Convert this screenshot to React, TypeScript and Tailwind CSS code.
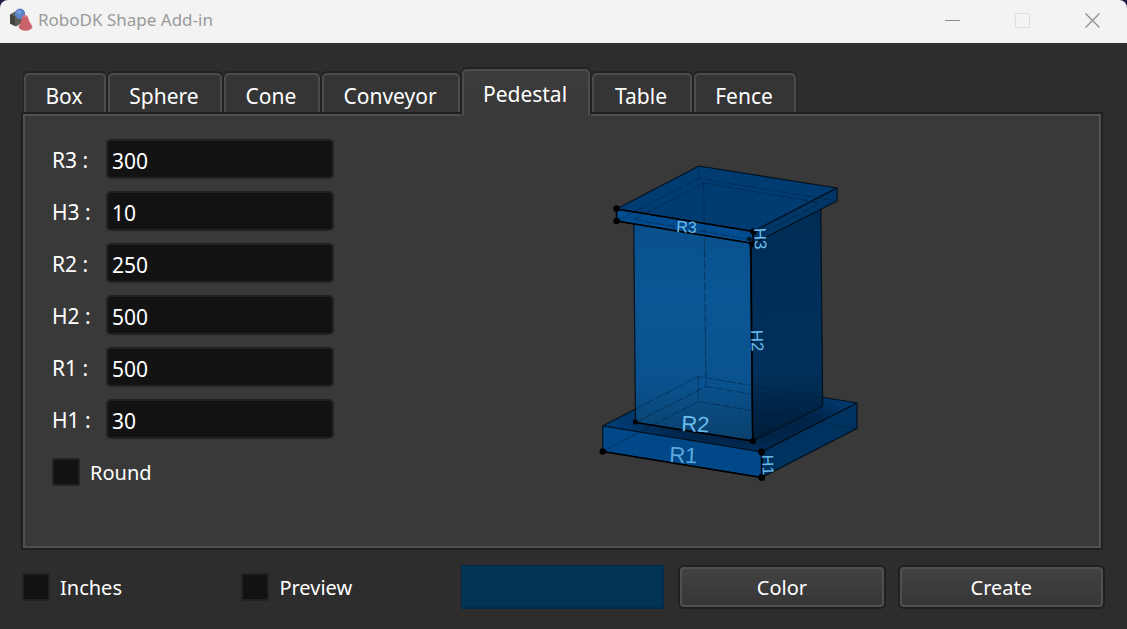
import { useState } from "react";

const tabs = [
  { name: "Box", width: "w-[82px]" },
  { name: "Sphere", width: "w-[114px]" },
  { name: "Cone", width: "w-[96px]" },
  { name: "Conveyor", width: "w-[138px]" },
  { name: "Pedestal", width: "w-[128px]" },
  { name: "Table", width: "w-[100px]" },
  { name: "Fence", width: "w-[102px]" },
];

const fields = [
  { id: "R3", value: "300" },
  { id: "H3", value: "10" },
  { id: "R2", value: "250" },
  { id: "H2", value: "500" },
  { id: "R1", value: "500" },
  { id: "H1", value: "30" },
];

function AppIcon() {
  return (
    <svg viewBox="0 0 24 24" className="w-6 h-6" aria-hidden="true">
      <path d="M1 6.5 L7 3 L13 6 V15 L7 18.5 L1 15.5 Z" fill="#5c5d56" />
      <path d="M1 6.5 L6 8.5 V18 L1 15.5 Z" fill="#44453f" />
      <circle cx="11" cy="5.8" r="5.2" fill="#5b83c9" />
      <circle cx="10" cy="4.3" r="2.4" fill="#7298d8" />
      <path d="M13.5 8 Q16 6.5 18.5 8 Q19.5 13 23.5 19 Q22 22.8 16.5 22.8 Q11 22.5 9.5 19 Q12.5 14 13.5 8 Z" fill="#c9626a" />
      <path d="M13.5 8 Q16 6.5 18.5 8 Q16 10 13.5 8 Z" fill="#d9828a" />
    </svg>
  );
}

function TitleBar() {
  return (
    <header className="bg-[#1d1c45]">
      <div className="flex h-[43px] items-center rounded-t-lg bg-[#f3f3f3] pb-[3px] pl-[9px]">
        <AppIcon />
        <h1 className="ml-[5px] flex-1 text-[17px] leading-6 text-[#999999]">RoboDK Shape Add-in</h1>
        <div className="flex">
          <button type="button" aria-label="Minimize" className="flex h-10 w-[70px] items-center justify-center">
            <svg viewBox="0 0 16 16" className="w-4 h-4" stroke="#8f8f8f" fill="none">
              <path d="M1 8.5 H16" />
            </svg>
          </button>
          <button type="button" aria-label="Maximize" disabled className="flex h-10 w-[70px] items-center justify-center">
            <svg viewBox="0 0 16 16" className="w-4 h-4" stroke="#dedede" fill="none">
              <rect x="1.5" y="1.5" width="14" height="14" rx="1" />
            </svg>
          </button>
          <button type="button" aria-label="Close" className="flex h-10 w-[70px] items-center justify-center">
            <svg viewBox="0 0 16 16" className="w-4 h-4" stroke="#8f8f8f" strokeWidth="1.3" fill="none">
              <path d="M1.5 1.5 L15.5 15.5 M15.5 1.5 L1.5 15.5" />
            </svg>
          </button>
        </div>
      </div>
    </header>
  );
}

function CheckBox({ label }: { label: string }) {
  return (
    <label className="flex items-center gap-2.5 text-[20px] leading-7">
      <input type="checkbox" className="h-7 w-7 appearance-none rounded-xs border-2 border-[#222222] bg-[#121212] checked:bg-[#4a4a4a]" />
      <span className="pt-0.5">{label}</span>
    </label>
  );
}

function PushButton({ label }: { label: string }) {
  return (
    <button
      type="button"
      className="h-10 rounded-[4px] border-2 border-[#505050] bg-linear-to-b from-[#424242] to-[#363636] pt-0.5 text-[20px] leading-7 text-white shadow-[0_0_0_2px_#202020]"
    >
      {label}
    </button>
  );
}

function PedestalDrawing() {
  return (
    <svg viewBox="598 160 264 326" className="mt-[21px] h-[326px] w-[264px]" role="img" aria-label="Pedestal dimensions">
      <defs>
        <linearGradient id="front" x1="0" y1="0" x2="0" y2="1">
          <stop offset="0" stopColor="#08508c" />
          <stop offset="0.35" stopColor="#0a5694" />
          <stop offset="0.75" stopColor="#09528d" />
          <stop offset="1" stopColor="#0a3f6b" />
        </linearGradient>
        <linearGradient id="side" x1="0" y1="0" x2="0" y2="1">
          <stop offset="0" stopColor="#002c55" />
          <stop offset="0.7" stopColor="#00305b" />
          <stop offset="1" stopColor="#001c38" />
        </linearGradient>
        <radialGradient id="baseTop" cx="0.55" cy="0.6" r="0.5">
          <stop offset="0" stopColor="#001c38" />
          <stop offset="0.6" stopColor="#00264c" />
          <stop offset="1" stopColor="#003c74" />
        </radialGradient>
      </defs>

      {/* base slab */}
      <g stroke="#04111e" strokeWidth="1.2" strokeLinejoin="round">
        <path d="M602.7 426 L698.3 376.5 L857 403 L761.5 452 Z" fill="url(#baseTop)" />
        <path d="M602.7 426 L761.5 452 V477.5 L602.7 451.5 Z" fill="#004888" />
        <path d="M761.5 452 L857 403 V428.5 L761.5 477.5 Z" fill="#00325f" />
      </g>

      {/* column */}
      <g stroke="#04111e" strokeWidth="1.2" strokeLinejoin="round">
        <path d="M633.7 219.5 L750.3 239.5 L752.7 441 L635.5 422.5 Z" fill="url(#front)" />
        <path d="M750.3 239.5 L820.7 203 L822.7 406 L752.7 441 Z" fill="url(#side)" />
      </g>

      {/* top slab */}
      <g stroke="#04111e" strokeWidth="1.2" strokeLinejoin="round">
        <path d="M616.5 209 L699 166 L837 188 L753.3 231.5 Z" fill="#003b72" />
        <path d="M616.5 209 L753.3 231.5 V243.5 L616.5 221 Z" fill="#004c8f" />
        <path d="M753.3 231.5 L837 188 V201 L753.3 243.5 Z" fill="#003767" />
      </g>

      {/* hidden edges */}
      <g fill="none" stroke="#02203c" strokeWidth="1" strokeDasharray="9 2" opacity="0.55">
        <path d="M616.5 221 L699 178.5 L837 201 M699 166 V178.5" />
        <path d="M633.7 219.5 L703.7 183 L820.7 203 M633.7 219.5 L750.3 239.5 L820.7 203" />
        <path d="M703.7 183 L706 386.5 M635.5 422.5 L706 386.5 L822.7 406" />
        <path d="M636 409 L698.3 376.5 L822 397.5 M698.3 376.5 V401.5" />
        <path d="M602.7 451.5 L698.3 401.5 L857 428.5" />
      </g>

      {/* measured edges */}
      <g fill="none" stroke="#000000" strokeWidth="1.5">
        <path d="M616.5 209 L753.3 231.5 V243.5 M616.5 209 V221 L753.3 243.5" />
        <path d="M751 243.5 L752.7 441 L635.5 422.5" />
        <path d="M602.7 451.5 L761.7 477.5 V452" />
      </g>
      <g fill="#000000">
        <circle cx="616.5" cy="208.5" r="3.2" />
        <circle cx="616.5" cy="221" r="3.2" />
        <circle cx="753.5" cy="231.5" r="3.2" />
        <circle cx="752.5" cy="244" r="3.2" />
        <circle cx="749.5" cy="239" r="2.4" opacity="0.7" />
        <circle cx="635.5" cy="422" r="2.6" />
        <circle cx="752.8" cy="441" r="3" />
        <circle cx="602.7" cy="451.5" r="3.2" />
        <circle cx="761.5" cy="452" r="3.4" />
        <circle cx="761.7" cy="477.5" r="3.4" />
      </g>

      <g fill="#6bbcec" fontFamily="Liberation Sans, sans-serif">
        <text transform="translate(676 232) rotate(3)" fontSize="16">R3</text>
        <text transform="translate(754 228) rotate(88)" fontSize="17">H3</text>
        <text transform="translate(751 330) rotate(88)" fontSize="17">H2</text>
        <text transform="translate(681 431) rotate(3)" fontSize="22">R2</text>
        <text transform="translate(669 462) rotate(3)" fontSize="22" fill="#5aa8dc">R1</text>
        <text transform="translate(762 455) rotate(88)" fontSize="16">H1</text>
      </g>
    </svg>
  );
}

export default function App() {
  const [active, setActive] = useState("Pedestal");

  return (
    <div className="flex min-h-screen flex-col bg-[#2d2d2d] font-['Noto_Sans',sans-serif] text-white">
      <TitleBar />

      <main className="flex flex-1 flex-col pt-[26px]">
        {/* Tabs */}
        <div role="tablist" className="flex items-end gap-0.5 pl-6">
          {tabs.map((tab) => (
            <button
              key={tab.name}
              type="button"
              role="tab"
              aria-selected={active === tab.name}
              onClick={() => setActive(tab.name)}
              className={`${tab.width} rounded-t-[5px] border-2 border-b-0 border-[#4c4c4c] pr-0.5 text-[21px] leading-7 shadow-[0_-1px_0_1px_#222222] ${
                active === tab.name
                  ? "relative z-10 -mb-1 h-[47px] bg-linear-to-b from-[#3e3e3e] to-[#393939] to-50%"
                  : "h-[39px] bg-[#353535] pt-1"
              }`}
            >
              {tab.name}
            </button>
          ))}
        </div>

        {/* Shape parameters */}
        <section
          role="tabpanel"
          className="mt-0.5 mr-[26px] ml-[23px] flex min-h-[434px] flex-1 gap-[27px] border-2 border-[#505050] bg-[#393939] pt-[23px] pl-[27px] shadow-[0_0_0_2px_#202020]"
        >
          <div className="flex flex-col gap-3">
            {fields.map((field) => (
              <div key={field.id} className="flex items-center">
                <label htmlFor={field.id} className="w-[54px] pt-0.5 text-[21px] leading-7">
                  {field.id} :
                </label>
                <input
                  id={field.id}
                  type="text"
                  defaultValue={field.value}
                  className="h-10 w-[228px] rounded-[5px] border-2 border-[#222222] bg-[#121212] px-1 pt-1 text-[21px] leading-7 outline-none"
                />
              </div>
            ))}
            <div className="pt-1.5">
              <CheckBox label="Round" />
            </div>
          </div>
          <div className="flex flex-1 items-start justify-center">
            <PedestalDrawing />
          </div>
        </section>

        {/* Footer */}
        <footer className="grid grid-cols-5 items-center gap-4 pt-[17px] pr-6 pb-5 pl-[22px]">
          <CheckBox label="Inches" />
          <CheckBox label="Preview" />
          <div className="h-11 border border-r-2 border-b-2 border-[#022a49] bg-[#003354]" />
          <PushButton label="Color" />
          <PushButton label="Create" />
        </footer>
      </main>
    </div>
  );
}
